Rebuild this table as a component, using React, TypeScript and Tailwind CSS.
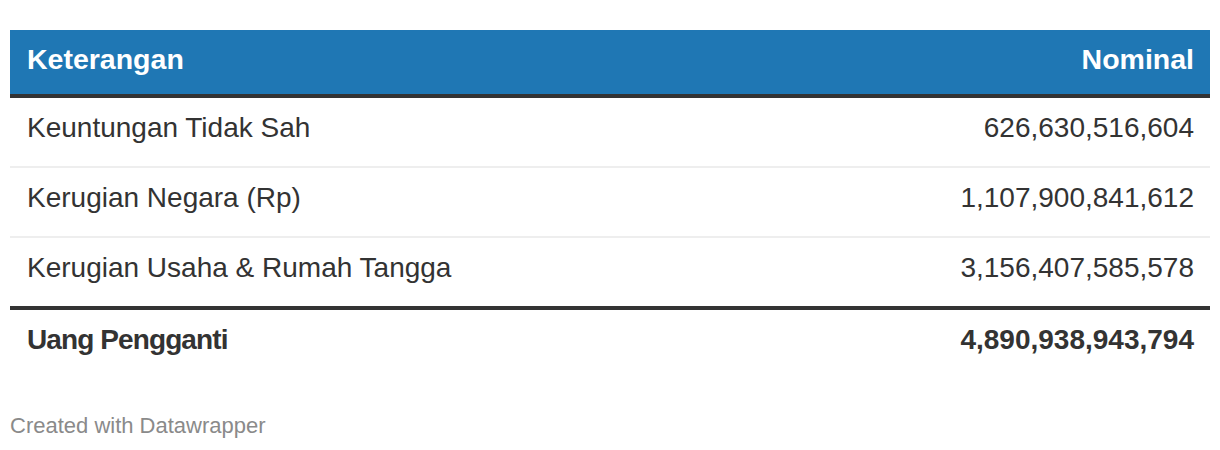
import React from "react";

type Row = { label: string; value: string };

const rows: Row[] = [
  { label: "Keuntungan Tidak Sah", value: "626,630,516,604" },
  { label: "Kerugian Negara (Rp)", value: "1,107,900,841,612" },
  { label: "Kerugian Usaha & Rumah Tangga", value: "3,156,407,585,578" },
];

const App = () => {
  return (
    <div
      className="w-[1220px] h-[450px] bg-white px-[10px] pt-[30px] text-[#333333]"
      style={{ fontFamily: '"Liberation Sans", Arial, Helvetica, sans-serif' }}
    >
      <div className="flex flex-col w-full">
        {/* header */}
        <div className="flex items-start justify-between bg-[#1f77b4] border-b-[4px] border-[#333333] pl-[17px] pr-[16px] pt-[12px] pb-[18px] text-white font-bold text-[28.5px] leading-[34px]">
          <span>Keterangan</span>
          <span>Nominal</span>
        </div>

        {rows.map((row, i) => (
          <div
            key={row.label}
            className={`flex items-start justify-between pl-[17px] pr-[16px] pt-[13px] pb-[21px] text-[28px] leading-[34px] ${
              i < rows.length - 1
                ? "border-b-2 border-[#eeeeee]"
                : "border-b-[4px] border-[#333333]"
            }`}
          >
            <span>{row.label}</span>
            <span>{row.value}</span>
          </div>
        ))}

        {/* total */}
        <div className="flex items-start justify-between pl-[17px] pr-[16px] pt-[13px] pb-[21px] text-[28px] leading-[34px] font-bold">
          <span className="tracking-[-0.9px]">Uang Pengganti</span>
          <span>4,890,938,943,794</span>
        </div>

        <p className="mt-[35px] text-[22px] leading-[26px] text-[#8a8a8a]">
          Created with Datawrapper
        </p>
      </div>
    </div>
  );
};

export default App;
